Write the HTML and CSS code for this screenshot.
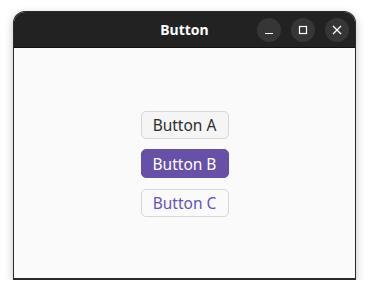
FILE: index.html
```html
<!DOCTYPE html>
<html lang="en">
<head>
    <meta charset="UTF-8">
    <title>Button</title>
    <link rel="stylesheet" href="styles.css">
</head>
<body>

<div class="window">
    <div class="titlebar">
        <span class="title">Button</span>
        <div class="controls">
            <span class="ctl">
                <svg width="10" height="10" viewBox="0 0 10 10"><path d="M1 8.5h8" stroke="#fff" stroke-width="1.2"/></svg>
            </span>
            <span class="ctl">
                <svg width="10" height="10" viewBox="0 0 10 10"><rect x="1.5" y="1.5" width="7" height="7" fill="none" stroke="#fff" stroke-width="1.2"/></svg>
            </span>
            <span class="ctl">
                <svg width="10" height="10" viewBox="0 0 10 10"><path d="M1 1l8 8M9 1l-8 8" stroke="#fff" stroke-width="1.3"/></svg>
            </span>
        </div>
    </div>
    <div class="content">
        <button class="btn">Button A</button>
        <button class="btn btn-suggested">Button B</button>
        <button class="btn btn-flat">Button C</button>
    </div>
</div>

</body>
</html>
```

FILE: styles.css
```css
body {
    margin: 0;
    background-color: #ffffff;
    font-family: "Noto Sans", "DejaVu Sans", sans-serif;
}
.window {
    margin: 11px 0 0 13px;
    width: 343px;
    height: 269px;
    box-sizing: border-box;
    border: 1px solid #2a2a2a;
    border-bottom-width: 2px;
    border-radius: 12px 12px 0 0;
    background-color: #fafafa;
    box-shadow: 0 3px 8px rgba(0,0,0,0.25);
    display: flex;
    flex-direction: column;
    overflow: hidden;
}
.titlebar {
    height: 35px;
    flex-shrink: 0;
    background-color: #222222;
    border-bottom: 1px solid #111;
    display: flex;
    align-items: center;
    justify-content: center;
    position: relative;
}
.title {
    color: #ffffff;
    font-weight: bold;
    font-size: 14px;
}
.controls {
    position: absolute;
    right: 6px;
    top: 6px;
    display: flex;
    gap: 10px;
}
.ctl {
    width: 24px;
    height: 24px;
    border-radius: 50%;
    background-color: #363636;
    display: flex;
    align-items: center;
    justify-content: center;
}
.content {
    flex: 1;
    display: flex;
    flex-direction: column;
    align-items: center;
    padding-top: 63px;
    gap: 11px;
}
.btn {
    font-family: "Noto Sans", "DejaVu Sans", sans-serif;
    font-size: 15.5px;
    width: 88px;
    height: 28px;
    padding: 0;
    border-radius: 5px;
    border: 1px solid #d6d6d6;
    background-color: #f5f5f5;
    color: #2e2e2e;
}
.btn-suggested {
    background-color: #6750a8;
    border-color: #6750a8;
    color: #ffffff;
    height: 29px;
    margin-top: -1px;
}
.btn-flat {
    background-color: #fafafa;
    color: #6653b8;
}
```
